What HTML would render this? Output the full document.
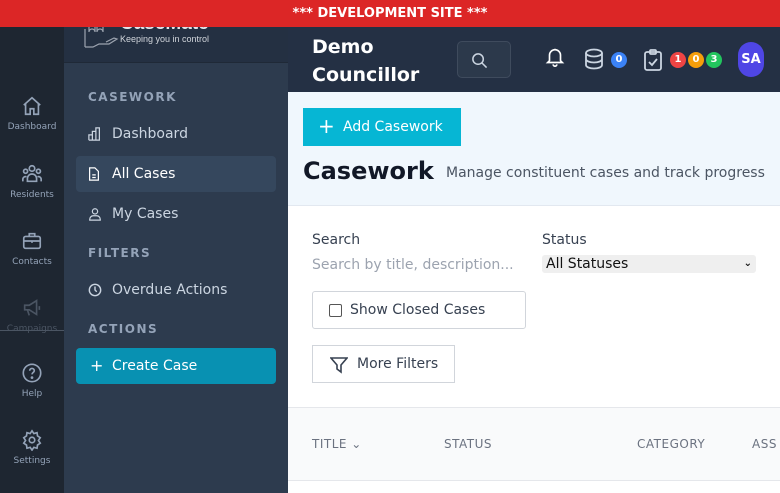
<!DOCTYPE html>
<html><head><style>
*{margin:0;padding:0;box-sizing:border-box}
body{width:780px;height:493px;overflow:hidden;font-family:"DejaVu Sans","Liberation Sans",sans-serif;background:#fff;position:relative}
.abs{position:absolute}
.banner{left:0;top:0;width:780px;height:27px;background:#dc2626;color:#fff;font-weight:bold;font-size:13px;text-align:center;line-height:27px;z-index:5}
.rail{left:0;top:27px;width:64px;height:466px;background:#1e2631}
.ri{position:absolute;left:0;width:64px;text-align:center;color:#94a3b8;font-size:9px}
.ri svg{display:block;margin:0 auto 5px}
.side{left:64px;top:27px;width:224px;height:466px;background:#2d3b4e}
.logo{left:64px;top:27px;width:224px;height:36px;background:#243042;border-bottom:1px solid #1f2937;overflow:hidden}
.sec{position:absolute;left:24px;color:#94a3b8;font-size:12px;font-weight:bold;letter-spacing:1.5px}
.it{position:absolute;left:12px;width:200px;height:36px;border-radius:4px;color:#cbd5e1;font-size:14px;line-height:36px;padding-left:36px}
.it svg{position:absolute;left:12px;top:11px}
.hdr{left:288px;top:27px;width:492px;height:65px;background:#243044}
.cont{left:288px;top:92px;width:492px;height:114px;background:#f0f7fd;border-bottom:1px solid #e2e8f0}
.badge{position:absolute;width:16px;height:16px;border-radius:8px;color:#fff;font-size:10px;font-weight:bold;text-align:center;line-height:16px}
</style></head><body>
<div class="abs banner">*** DEVELOPMENT SITE ***</div>
<div class="abs rail">
 <div class="ri" style="top:68px"><svg width="22" height="22" viewBox="0 0 24 24" fill="none" stroke="#94a3b8" stroke-width="1.8"><path d="M3 11l9-8 9 8M5 9v12h5v-6h4v6h5V9"/></svg>Dashboard</div>
 <div class="ri" style="top:136px"><svg width="24" height="22" viewBox="0 0 24 24" fill="none" stroke="#94a3b8" stroke-width="1.8"><circle cx="12" cy="6" r="3"/><circle cx="5" cy="9" r="2.2"/><circle cx="19" cy="9" r="2.2"/><path d="M7 20v-3a5 5 0 0110 0v3zM2 20v-2a3 3 0 014-3M22 20v-2a3 3 0 00-4-3"/></svg>Residents</div>
 <div class="ri" style="top:203px"><svg width="22" height="22" viewBox="0 0 24 24" fill="none" stroke="#94a3b8" stroke-width="1.8"><rect x="3" y="7" width="18" height="13" rx="2"/><path d="M9 7V4h6v3M3 12h18M12 11v3"/></svg>Contacts</div>
 <div class="ri" style="top:270px;color:#4b5563"><svg width="22" height="22" viewBox="0 0 24 24" fill="none" stroke="#4b5563" stroke-width="1.8"><path d="M4 9h5l8-5v15l-8-5H4zM7 14l2 6M20 10v4"/></svg>Campaigns</div>
 <div class="abs" style="left:0;top:303px;width:64px;height:1px;background:#4b5563"></div>
 <div class="ri" style="top:335px"><svg width="22" height="22" viewBox="0 0 24 24" fill="none" stroke="#94a3b8" stroke-width="1.8"><circle cx="12" cy="12" r="9.5"/><path d="M9.5 9.5a2.5 2.5 0 115 0c0 2-2.5 2-2.5 4"/><circle cx="12" cy="17" r=".6" fill="#94a3b8"/></svg>Help</div>
 <div class="ri" style="top:402px"><svg width="22" height="22" viewBox="0 0 24 24" fill="none" stroke="#94a3b8" stroke-width="1.8"><circle cx="12" cy="12" r="3"/><path d="M12 2l2 3 3.5-1 .5 3.5 3 2-2 3 2 3-3 2-.5 3.5-3.5-1-2 3-2-3-3.5 1-.5-3.5-3-2 2-3-2-3 3-2 .5-3.5 3.5 1z"/></svg>Settings</div>
</div>
<div class="abs side">
 <div class="sec" style="top:63px">CASEWORK</div>
 <div class="it" style="top:89px"><svg width="14" height="14" viewBox="0 0 16 16" fill="none" stroke="#cbd5e1" stroke-width="1.4"><path d="M1 15V9h4v6M5 15V5h4v10M9 15V1h4v14H1"/></svg>Dashboard</div>
 <div class="it" style="top:129px;background:#35475d;color:#fff"><svg width="12" height="14" viewBox="0 0 12 16" fill="none" stroke="#fff" stroke-width="1.4"><path d="M1 1h6l4 4v10H1zM4 9h4M4 12h4"/></svg>All Cases</div>
 <div class="it" style="top:169px"><svg width="14" height="14" viewBox="0 0 16 16" fill="none" stroke="#cbd5e1" stroke-width="1.4"><circle cx="8" cy="5" r="3"/><path d="M2 15v-1a4 4 0 014-4h4a4 4 0 014 4v1z"/></svg>My Cases</div>
 <div class="sec" style="top:219px">FILTERS</div>
 <div class="it" style="top:245px"><svg width="14" height="14" viewBox="0 0 16 16" fill="none" stroke="#cbd5e1" stroke-width="1.6"><circle cx="8" cy="8" r="6.5"/><path d="M8 4v4l2 2"/></svg>Overdue Actions</div>
 <div class="sec" style="top:295px">ACTIONS</div>
 <div class="it" style="top:321px;background:#0891b2;color:#fff;padding-left:36px"><span style="position:absolute;left:14px;font-size:16px">+</span>Create Case</div>
</div>
<div class="abs logo">
 <svg class="abs" style="left:20px;top:-6px" width="36" height="28" viewBox="0 0 36 28" fill="none" stroke="#9ca3af" stroke-width="1.2"><path d="M1 26h8l6-3h10l8-5-3-1-8 4M1 8v18M5 4v7a3 3 0 016 0v-7M13 4v7a3 3 0 016 0v-7M3 4h18"/></svg>
 <div class="abs" style="left:56px;top:-14px;color:#e5e7eb;font-size:19px;font-weight:bold;font-family:'Liberation Sans',sans-serif">CaseMate</div>
 <div class="abs" style="left:56px;top:7px;color:#d1d5db;font-size:9px;font-family:'Liberation Sans',sans-serif">Keeping you in control</div>
</div>
<div class="abs hdr">
 <div class="abs" style="left:24px;top:6px;color:#fff;font-size:19px;font-weight:bold;line-height:28px">Demo<br>Councillor</div>
 <div class="abs" style="left:169px;top:14px;width:54px;height:37px;border:1px solid #3f4b5d;border-radius:5px;background:#2c394b"><svg style="position:absolute;left:13px;top:10px" width="17" height="17" viewBox="0 0 18 18" fill="none" stroke="#cbd5e1" stroke-width="1.6"><circle cx="7.5" cy="7.5" r="5.5"/><path d="M11.5 11.5l5 5"/></svg></div>
 <svg class="abs" style="left:256px;top:19px" width="22" height="22" viewBox="0 0 24 24" fill="none" stroke="#fff" stroke-width="1.8"><path d="M6 16V10a6 6 0 0112 0v6l2 2H4zM10 20a2 2 0 004 0M12 3v1"/></svg>
 <svg class="abs" style="left:296px;top:21px" width="20" height="22" viewBox="0 0 20 22" fill="none" stroke="#cbd5e1" stroke-width="1.8"><ellipse cx="10" cy="5" rx="8" ry="3.5"/><path d="M2 5v12c0 2 3.5 3.5 8 3.5s8-1.5 8-3.5V5M2 11c0 2 3.5 3.5 8 3.5s8-1.5 8-3.5"/></svg>
 <div class="badge" style="left:323px;top:25px;background:#3b82f6">0</div>
 <svg class="abs" style="left:356px;top:22px" width="18" height="22" viewBox="0 0 18 22" fill="none" stroke="#cbd5e1" stroke-width="1.8"><rect x="1" y="3" width="16" height="18" rx="2"/><rect x="6" y="1" width="6" height="4" rx="1"/><path d="M5 13l3 3 5-6"/></svg>
 <div class="badge" style="left:382px;top:25px;background:#ef4444">1</div>
 <div class="badge" style="left:400px;top:25px;background:#f59e0b">0</div>
 <div class="badge" style="left:418px;top:25px;background:#22c55e">3</div>
 <div class="abs" style="left:450px;top:15px;width:26px;height:35px;border-radius:13px;background:#4f46e5;color:#fff;font-size:13px;font-weight:bold;text-align:center;line-height:35px">SA</div>
</div>
<div class="abs cont">
 <div class="abs" style="left:15px;top:16px;width:158px;height:38px;background:#06b6d4;color:#fff;font-size:14px;line-height:38px;padding-left:40px"><span style="position:absolute;left:15px;font-size:20px;top:-1px">+</span>Add Casework</div>
 <div class="abs" style="left:15px;top:65px;color:#111827;font-size:24px;font-weight:bold">Casework</div>
 <div class="abs" style="left:158px;top:73px;color:#4b5563;font-size:14px">Manage constituent cases and track progress</div>
</div>
<div class="abs" style="left:312px;top:232px;font-size:14px;color:#374151">Search</div>
<div class="abs" style="left:312px;top:257px;font-size:14px;color:#9ca3af;white-space:nowrap">Search by title, description...</div>
<div class="abs" style="left:542px;top:232px;font-size:14px;color:#374151">Status</div>
<div class="abs" style="left:542px;top:255px;width:214px;height:18px;background:#efefef;border-radius:3px;font-size:14px;color:#111;padding-left:4px;line-height:18px">All Statuses<span style="position:absolute;right:4px;font-size:10px;font-weight:bold">&#8964;</span></div>
<div class="abs" style="left:312px;top:291px;width:214px;height:38px;border:1px solid #d1d5db;border-radius:3px;font-size:14px;color:#374151;line-height:36px;padding-left:37px"><span style="position:absolute;left:16px;top:12px;width:13px;height:13px;border:1px solid #555;border-radius:2px"></span>Show Closed Cases</div>
<div class="abs" style="left:312px;top:345px;width:143px;height:38px;border:1px solid #d1d5db;font-size:14px;color:#374151;line-height:36px;padding-left:44px"><svg style="position:absolute;left:17px;top:10px" width="18" height="18" viewBox="0 0 18 18" fill="none" stroke="#374151" stroke-width="1.6"><path d="M1 2h16l-6 7v7l-4-3V9z"/></svg>More Filters</div>
<div class="abs" style="left:288px;top:407px;width:492px;height:74px;background:#f9fafb;border-top:1px solid #e5e7eb;border-bottom:1px solid #e5e7eb;color:#6b7280;font-size:12px;letter-spacing:.5px">
 <span class="abs" style="left:24px;top:29px">TITLE &#8964;</span>
 <span class="abs" style="left:156px;top:29px">STATUS</span>
 <span class="abs" style="left:349px;top:29px">CATEGORY</span>
 <span class="abs" style="left:464px;top:29px">ASS</span>
</div>
</body></html>
